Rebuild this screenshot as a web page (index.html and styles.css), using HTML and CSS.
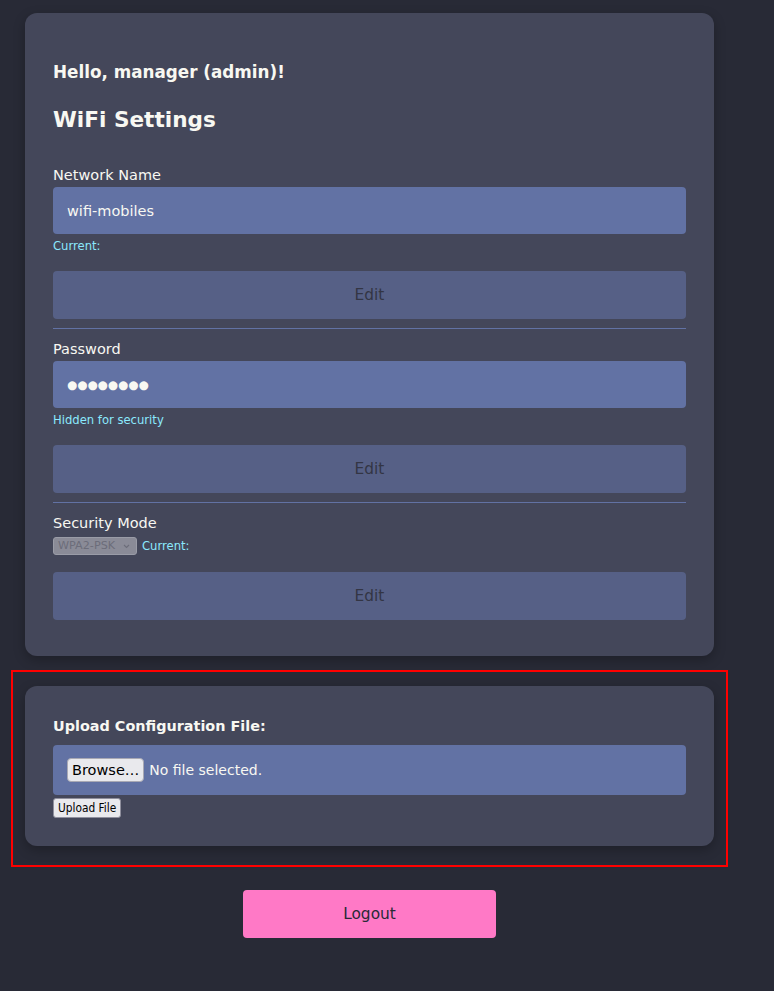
FILE: index.html
```html
<!DOCTYPE html>
<html lang="en">
<head>
<meta charset="utf-8">
<title>WiFi Settings</title>
<link rel="stylesheet" href="styles.css">
</head>
<body>
<div class="page">
  <section class="card settings">
    <h3 class="greeting">Hello, manager (admin)!</h3>
    <h2 class="title">WiFi Settings</h2>

    <div class="field field-first">
      <label class="label">Network Name</label>
      <input class="input" type="text" value="wifi-mobiles" readonly>
      <div class="hint">Current:</div>
      <button class="edit" disabled>Edit</button>
    </div>
    <hr class="sep">

    <div class="field">
      <label class="label">Password</label>
      <input class="input input-secret" type="text" value="●●●●●●●●" readonly>
      <div class="hint">Hidden for security</div>
      <button class="edit" disabled>Edit</button>
    </div>
    <hr class="sep">

    <div class="field">
      <label class="label">Security Mode</label>
      <div class="select-row">
        <span class="select">WPA2-PSK<svg class="chev" width="7" height="5" viewBox="0 0 7 5"><path d="M1 1 L3.5 3.5 L6 1" fill="none" stroke="#6c6d7a" stroke-width="1.1"/></svg></span>
        <span class="hint hint-inline">Current:</span>
      </div>
      <button class="edit edit-tight" disabled>Edit</button>
    </div>
  </section>

  <div class="upload-frame">
    <section class="card upload">
      <label class="upload-label">Upload Configuration File:</label>
      <div class="file-box">
        <button class="browse">Browse…</button>
        <span class="file-name">No file selected.</span>
      </div>
      <button class="upload-btn">Upload File</button>
    </section>
  </div>

  <div class="logout-row">
    <button class="logout">Logout</button>
  </div>
</div>
</body>
</html>
```

FILE: styles.css
```css
* { box-sizing: border-box; }

html, body {
  margin: 0;
  padding: 0;
  background: #282a36;
}

body {
  font-family: "DejaVu Sans", "Liberation Sans", sans-serif;
  color: #f8f8f2;
  min-height: 991px;
}

.page {
  width: 717px;
  margin-left: 11px;
  padding-top: 13px;
}

.card {
  background: #44475a;
  border-radius: 12px;
  box-shadow: 0 4px 12px rgba(0, 0, 0, 0.25);
}

.settings {
  margin: 0 14px;
  padding: 28px 28px 36px;
}

.greeting {
  margin: 21px 0 0;
  font-size: 16.8px;
  line-height: 20px;
  font-weight: bold;
}

.title {
  margin: 25px 0 0;
  font-size: 21.6px;
  line-height: 25px;
  font-weight: bold;
}

.field { padding-top: 12px; }
.field-first { padding-top: 35px; }

.label {
  display: block;
  font-size: 14.5px;
  line-height: 17px;
  margin-bottom: 3px;
}

.input {
  display: block;
  width: 100%;
  height: 47px;
  padding: 0 14px;
  border: none;
  border-radius: 4px;
  background: #6272a4;
  color: #f8f8f2;
  font-family: "DejaVu Sans", sans-serif;
  font-size: 14.5px;
  outline: none;
}

.input-secret {
  font-size: 11.7px;
}

.hint {
  margin-top: 5px;
  font-size: 11.6px;
  line-height: 14px;
  color: #8be9fd;
}

.edit {
  display: block;
  width: 100%;
  height: 48px;
  margin-top: 18px;
  border: none;
  border-radius: 4px;
  background: #6272a4;
  color: #282a36;
  opacity: 0.6;
  font-family: "DejaVu Sans", sans-serif;
  font-size: 15.4px;
}

.edit-tight { margin-top: 17px; }

.sep {
  margin: 9px 0 0;
  border: none;
  height: 1px;
  background: #6272a4;
}

.select-row {
  display: flex;
  align-items: center;
  gap: 5px;
  margin-top: 5px;
  height: 18px;
}

.select {
  display: flex;
  align-items: center;
  justify-content: space-between;
  width: 84px;
  height: 18px;
  padding: 0 6px 0 4px;
  border: 1px solid #9a9ca7;
  border-radius: 3px;
  background: #8a8b97;
  color: #6c6d7a;
  font-size: 11.2px;
  line-height: 16px;
}

.chev { display: block; }

.hint-inline { margin-top: 0; }

.upload-frame {
  margin-top: 14px;
  border: 2px solid #ff0000;
  padding: 14px 12px 19px;
}

.upload {
  padding: 32px 28px 28px;
}

.upload-label {
  display: block;
  font-size: 14.4px;
  line-height: 16px;
  font-weight: bold;
}

.file-box {
  display: flex;
  align-items: center;
  gap: 5px;
  height: 50px;
  margin-top: 11px;
  padding: 0 14px;
  background: #6272a4;
  border-radius: 4px;
}

.browse {
  height: 24px;
  padding: 0 4px;
  border: 1px solid #a9a9b4;
  border-radius: 4px;
  background: #e9e9ed;
  color: #000;
  font-family: "DejaVu Sans", sans-serif;
  font-size: 14.5px;
  line-height: 20px;
}

.file-name {
  font-size: 14px;
  color: #f8f8f2;
}

.upload-btn {
  display: block;
  height: 20px;
  margin-top: 3px;
  padding: 0 4px;
  border: 1px solid #8f8f9d;
  border-radius: 3px;
  background: #e9e9ed;
  color: #000;
  font-family: "DejaVu Sans Condensed", "DejaVu Sans", sans-serif;
  font-size: 11.8px;
  line-height: 16px;
}

.logout-row {
  display: flex;
  justify-content: center;
  margin-top: 23px;
}

.logout {
  width: 253px;
  height: 48px;
  border: none;
  border-radius: 4px;
  background: #ff79c6;
  color: #282a36;
  font-family: "DejaVu Sans", sans-serif;
  font-size: 15.4px;
}
```
